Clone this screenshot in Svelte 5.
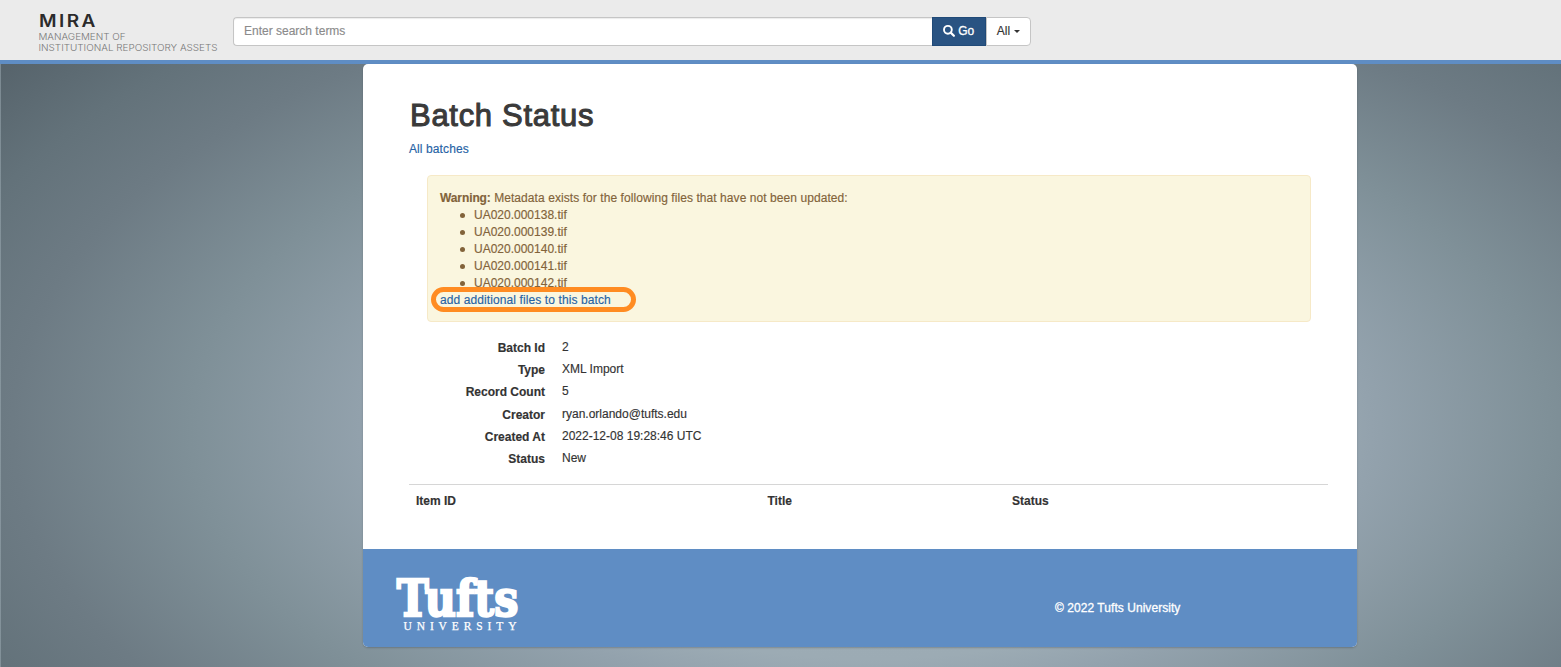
<script>
  const files = ['UA020.000138.tif', 'UA020.000139.tif', 'UA020.000140.tif', 'UA020.000141.tif', 'UA020.000142.tif'];
  const details = [
    ['Batch Id', '2'],
    ['Type', 'XML Import'],
    ['Record Count', '5'],
    ['Creator', 'ryan.orlando@tufts.edu'],
    ['Created At', '2022-12-08 19:28:46 UTC'],
    ['Status', 'New']
  ];
</script>

<div class="page">
  <header>
    <svg class="brand" width="190" height="60" viewBox="0 0 190 60" role="img" aria-label="MIRA">
      <text transform="translate(0 27) scale(1.12 1)" class="mira">MIRA</text>
      <text x="-.5" y="40" class="sub" textLength="87" lengthAdjust="spacingAndGlyphs">MANAGEMENT OF</text>
      <text x="-.5" y="51.2" class="sub" textLength="179" lengthAdjust="spacingAndGlyphs">INSTITUTIONAL REPOSITORY ASSETS</text>
    </svg>
    <div class="search">
      <input type="text" placeholder="Enter search terms" />
      <button class="go">
        <svg width="12" height="12" viewBox="0 0 12 12"><circle cx="4.9" cy="4.8" r="3.9" fill="none" stroke="#fff" stroke-width="1.9" /><path d="M7.7 7.6L10.9 10.8" stroke="#fff" stroke-width="2.2" stroke-linecap="round" /></svg>
        <span>Go</span>
      </button>
      <button class="all"><span>All</span><i></i></button>
    </div>
  </header>
  <main>
    <section class="content">
      <h1>Batch Status</h1>
      <a class="batches" href="#all">All batches</a>
      <div class="alert">
        <p><b>Warning:</b> Metadata exists for the following files that have not been updated:</p>
        <ul>
          {#each files as file}<li>{file}</li>{/each}
        </ul>
        <div class="add"><a href="#add">add additional files to this batch</a><span class="ring"></span></div>
      </div>
      <dl>
        {#each details as [term, value]}
          <dt>{term}</dt><dd>{value}</dd>
        {/each}
      </dl>
      <div class="thead"><span>Item ID</span><span>Title</span><span>Status</span></div>
    </section>
    <footer>
      <svg width="130" height="60" viewBox="0 0 130 60" role="img" aria-label="Tufts University">
        <text x="0.8" y="40.3" class="tufts" textLength="121.5" lengthAdjust="spacingAndGlyphs">Tufts</text>
        <text x="7.5" y="54" class="univ" textLength="113">UNIVERSITY</text>
      </svg>
      <span class="copy">© 2022 Tufts University</span>
    </footer>
  </main>
</div>

<style>
  :global(body) { margin: 0; overflow: hidden; }
  .page {
    height: 667px; box-sizing: border-box; overflow: hidden;
    font: 12px/17px "Liberation Sans", Arial, sans-serif; color: #333;
    -webkit-text-stroke: .15px currentColor;
    background:
      linear-gradient(90deg, rgba(160,175,183,.5) 1px, transparent 1px),
      radial-gradient(1114px 587px at 870px 430px, #a3b2bb 0, #9cabb4 39%, #93a2ad 45%, #7f9098 61%, #6d7b84 77%, #63727a 88%, #56636b 100%);
  }
  header { height: 60px; background: #ebebeb; border-bottom: 4px solid #5f8dc4; display: flex; }
  svg { overflow: visible; }
  .brand { margin-left: 39px; flex: none; -webkit-text-stroke: 0; }
  .mira { font: 600 17px Inter, sans-serif; fill: #2b2b2b; letter-spacing: 2.2px; }
  .sub { font: 300 9.3px Inter, sans-serif; fill: #777; }
  .search { margin: 17px 0 0 4px; width: 798px; height: 29px; display: flex; }
  input { box-sizing: border-box; width: 698.5px; height: 29px; border: 1px solid #c5c5c5; border-right: 0; border-radius: 4px 0 0 4px; padding: 0 10px 1px; font: 12px "Liberation Sans", Arial, sans-serif; box-shadow: inset 0 1px 1px rgba(0,0,0,.08); background: #fff; }
  input::placeholder { color: #8b8b8b; opacity: 1; }
  button { box-sizing: border-box; height: 29px; padding: 0; font: 12px "Liberation Sans", Arial, sans-serif; display: flex; align-items: center; justify-content: center; }
  .go { width: 54.5px; background: #295382; color: #fff; border: 1px solid #204a78; gap: 3px; -webkit-text-stroke: .3px #fff; }
  .go span, .all span { padding-bottom: 1px; }
  .go svg { margin-bottom: 2px; }
  .all { width: 45px; background: #fff; color: #333; border: 1px solid #c5c5c5; border-radius: 0 4px 4px 0; gap: 4px; }
  .all i { border: 3px solid transparent; border-top-color: #333; border-bottom: 0; }
  main { width: 994px; margin-left: 363px; height: 583px; border-radius: 5px; overflow: hidden; box-shadow: 0 1px 2px rgba(0,0,0,.2); background: #fff; }
  .content { height: 485px; box-sizing: border-box; padding: 34px 29px 0 46px; }
  h1 { margin: 0; font: 500 31px/36px "Liberation Sans", Arial, sans-serif; color: #3a3a3a; -webkit-text-stroke: 1.05px #3a3a3a; letter-spacing: .7px; padding-left: 1px; }
  a { color: #2763a5; text-decoration: none; letter-spacing: .1px; }
  .batches { display: block; margin-top: 7px; }
  .alert { box-sizing: border-box; margin: 17px 17px 0 18px; height: 147px; border: 1px solid #f6e9c7; border-radius: 4px; background: #faf6df; color: #82633a; padding: 14px 12px; }
  .alert p { margin: 0; letter-spacing: .07px; }
  .alert b { letter-spacing: -.1px; }
  ul { margin: 0; padding: 0; list-style: none; }
  li { display: flex; align-items: center; gap: 9.5px; padding-left: 19.5px; }
  li::before { content: ''; width: 5px; height: 5px; border-radius: 50%; background: #82633a; }
  .add { position: relative; }
  .ring { position: absolute; left: -9px; top: -5px; width: 195px; height: 15px; border: 5px solid #ff8c22; border-radius: 13px; }
  dl { margin: 14px 0 0; display: grid; grid-template-columns: 136px 1fr; column-gap: 17px; grid-auto-rows: 22.2px; }
  dt { font-weight: bold; text-align: right; line-height: 24px; }
  dd { margin: 0; line-height: 22px; }
  .thead { display: grid; grid-template-columns: 351.5px 244.5px 1fr; border-top: 1px solid #d6d6d6; margin-top: 15px; padding: 8px 7px 7px; font-weight: bold; }
  footer { height: 98px; background: #5f8dc4; display: flex; }
  footer svg { margin: 27px 0 0 33px; }
  .tufts { font: bold 51px "DejaVu Serif", serif; fill: #fff; stroke: #fff; stroke-width: 2.4px; }
  .univ { font: 11.5px "Liberation Serif", serif; fill: #fff; stroke: #fff; stroke-width: .25px; }
  .copy { color: #fff; margin: 51px 0 0 529px; letter-spacing: .05px; -webkit-text-stroke: .3px #fff; }
</style>
